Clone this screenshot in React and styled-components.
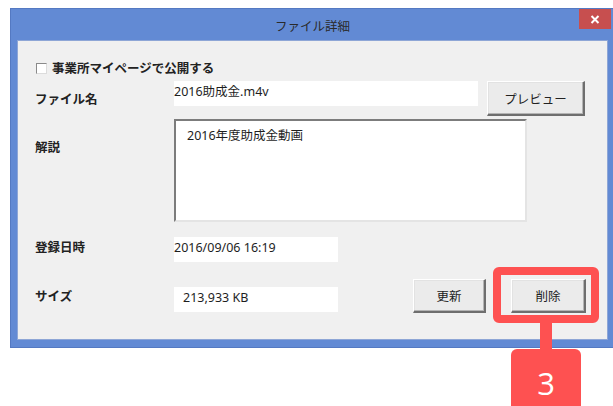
import React from "react";
import styled, { createGlobalStyle } from "styled-components";

const Global = createGlobalStyle`
  html, body {
    margin: 0;
    padding: 0;
    background: #ffffff;
    overflow: hidden;
  }
  body {
    font-family: "Noto Sans", "Noto Sans CJK JP", sans-serif;
    color: #1e1e1e;
  }
`;

const Page = styled.div`
  position: relative;
  width: 613px;
  height: 406px;
  padding: 8px 0 0 10px;
  box-sizing: border-box;
`;

const Window = styled.div`
  width: 604px;
  box-sizing: border-box;
  background: #628ad4;
  border: 1px solid #5479c2;
  padding: 0 5px 7px 6px;
  display: flex;
  flex-direction: column;
`;

const TitleBar = styled.div`
  height: 31px;
  display: grid;
  grid-template-columns: 1fr auto 1fr;
`;

const Title = styled.div`
  grid-column: 2;
  align-self: center;
  font-family: "Noto Sans CJK JP", sans-serif;
  font-size: 12.5px;
  line-height: 16px;
  color: #2a2a2a;
  margin-top: 2px;
`;

const CloseButton = styled.div`
  grid-column: 3;
  justify-self: end;
  align-self: start;
  width: 32px;
  height: 20px;
  margin-right: -3px;
  background: #c74f4f;
  display: flex;
  align-items: center;
  justify-content: center;
`;

const Panel = styled.div`
  background: #f0f0f0;
  border: 1px solid #8ea6d6;
  padding: 20px 21px 26px 17px;
  display: flex;
  flex-direction: column;
`;

const CheckRow = styled.label`
  display: flex;
  align-items: center;
  height: 14px;
  gap: 5px;
  padding-left: 1px;
`;

const CheckBox = styled.span`
  width: 11px;
  height: 11px;
  box-sizing: border-box;
  background: #ffffff;
  border-top: 1px solid #8a8a8a;
  border-left: 1px solid #8a8a8a;
  border-right: 1px solid #dcdcdc;
  border-bottom: 1px solid #dcdcdc;
`;

const BoldText = styled.span`
  font-family: "Noto Sans CJK JP", sans-serif;
  font-weight: 700;
  font-size: 12.5px;
  line-height: 16px;
  color: #222222;
`;

const Row = styled.div`
  display: flex;
  align-items: flex-start;
  height: ${(p) => p.$h}px;
  margin-top: ${(p) => p.$gap}px;
`;

const Label = styled(BoldText)`
  width: 139px;
  flex: none;
  margin-top: ${(p) => p.$top}px;
`;

const Field = styled.div`
  width: ${(p) => p.$w}px;
  height: 25px;
  box-sizing: border-box;
  background: #ffffff;
  margin-top: ${(p) => p.$top || 0}px;
  padding: 1px 0 0 ${(p) => p.$pad || 0}px;
  font-size: 12.5px;
  line-height: 19px;
  color: #1e1e1e;
  white-space: nowrap;
`;

const TextArea = styled.div`
  width: 353px;
  height: 103px;
  box-sizing: border-box;
  background: #ffffff;
  border-top: 2px solid #7c7c7c;
  border-left: 2px solid #7c7c7c;
  border-right: 2px solid #e4e4e4;
  border-bottom: 2px solid #e4e4e4;
  padding: 6px 0 0 11px;
  font-size: 12.5px;
  line-height: 18px;
  color: #1e1e1e;
`;

const Button = styled.div`
  width: ${(p) => p.$w}px;
  height: ${(p) => p.$h}px;
  box-sizing: border-box;
  margin-left: ${(p) => p.$ml};
  background: #ebebeb;
  border-top: 1px solid #ffffff;
  border-left: 1px solid #ffffff;
  border-right: 2px solid #6e6e6e;
  border-bottom: 2px solid #6e6e6e;
  box-shadow: inset -1px -1px 0 #b4b4b4, inset 1px 1px 0 #e2e2e2;
  display: flex;
  align-items: center;
  justify-content: center;
  font-family: "Noto Sans CJK JP", sans-serif;
  font-size: 12.5px;
  color: #222222;
`;

const Annotation = styled.div`
  position: absolute;
  left: 493px;
  top: 267px;
  width: 106px;
  display: flex;
  flex-direction: column;
  align-items: center;
`;

const Frame = styled.div`
  width: 106px;
  height: 56px;
  box-sizing: border-box;
  border: 8px solid #fe5151;
  border-radius: 6px;
`;

const Stem = styled.div`
  width: 12px;
  height: 26px;
  background: #fe5151;
`;

const Badge = styled.div`
  width: 70px;
  height: 60px;
  background: #fe5151;
  border-radius: 6px 6px 0 0;
  display: flex;
  justify-content: center;
  color: #ffffff;
  font-family: "Open Sans", "Noto Sans", sans-serif;
  font-size: 31px;
  line-height: 44px;
  padding-top: 12px;
  box-sizing: border-box;
`;

export default function App() {
  return (
    <>
      <Global />
      <Page>
        <Window>
          <TitleBar>
            <Title>ファイル詳細</Title>
            <CloseButton>
              <svg width="10" height="9" viewBox="0 0 10 9">
                <path d="M1.5 1 L8.5 8 M8.5 1 L1.5 8" stroke="#ffffff" strokeWidth="2" />
              </svg>
            </CloseButton>
          </TitleBar>
          <Panel>
            <CheckRow>
              <CheckBox />
              <BoldText>事業所マイページで公開する</BoldText>
            </CheckRow>
            <Row $h={35} $gap={6}>
              <Label $top={10}>ファイル名</Label>
              <Field $w={304}>2016助成金.m4v</Field>
              <Button $w={98} $h={35} $ml="9px">プレビュー</Button>
            </Row>
            <Row $h={103} $gap={3}>
              <Label $top={20}>解説</Label>
              <TextArea>2016年度助成金動画</TextArea>
            </Row>
            <Row $h={25} $gap={15}>
              <Label $top={2}>登録日時</Label>
              <Field $w={164}>2016/09/06 16:19</Field>
            </Row>
            <Row $h={34} $gap={17}>
              <Label $top={9}>サイズ</Label>
              <Field $w={164} $top={8} $pad={9}>213,933 KB</Field>
              <Button $w={73} $h={34} $ml="auto">更新</Button>
              <Button $w={75} $h={34} $ml="25px">削除</Button>
            </Row>
          </Panel>
        </Window>
        <Annotation>
          <Frame />
          <Stem />
          <Badge>3</Badge>
        </Annotation>
      </Page>
    </>
  );
}
